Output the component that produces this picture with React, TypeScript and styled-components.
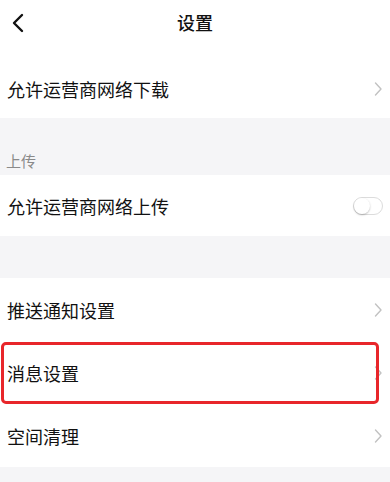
import { createGlobalStyle } from "styled-components";
import styled from "styled-components";

const GlobalStyle = createGlobalStyle`
    html, body {
        margin: 0;
        padding: 0;
        background: #f5f5f7;
        font-family: "Noto Sans CJK SC", "Noto Sans", sans-serif;
    }
`;

const Page = styled.div`
    width: 390px;
    height: 482px;
    overflow: hidden;
    background: #f5f5f7;
    display: flex;
    flex-direction: column;
`;

const Header = styled.div`
    height: 60px;
    background: #fff;
    display: flex;
    align-items: flex-start;
    justify-content: center;
    position: relative;
    flex-shrink: 0;
`;

const Title = styled.span`
    font-size: 18px;
    font-weight: 500;
    color: #111;
    margin-top: 9px;
`;

const BackButton = styled.div`
    position: absolute;
    left: 10px;
    top: 12px;
    width: 18px;
    height: 22px;
`;

const Row = styled.div<{ $h: number }>`
    height: ${(p) => p.$h}px;
    background: #fff;
    display: flex;
    align-items: center;
    justify-content: space-between;
    padding: 0 7px;
    position: relative;
    flex-shrink: 0;
`;

const Label = styled.span`
    font-size: 18px;
    color: #111;
`;

const Gap = styled.div<{ $h: number }>`
    height: ${(p) => p.$h}px;
    flex-shrink: 0;
`;

const SectionTitle = styled.div`
    height: 57px;
    display: flex;
    align-items: flex-end;
    padding: 0 6px 4px;
    box-sizing: border-box;
    font-size: 15px;
    color: #8a8a8a;
    flex-shrink: 0;
`;

const Toggle = styled.div`
    width: 30px;
    height: 18px;
    border-radius: 9px;
    border: 1px solid #dcdcdc;
    background: #fff;
    box-sizing: border-box;
    position: relative;
    &::after {
        content: "";
        position: absolute;
        left: 0;
        top: 0;
        width: 16px;
        height: 16px;
        border-radius: 50%;
        background: #fff;
        box-shadow: 0 1px 2px rgba(0, 0, 0, 0.25);
    }
`;

const Highlight = styled.div`
    position: absolute;
    left: 1px;
    top: 1px;
    right: 11px;
    bottom: 0;
    border: 3px solid #e8262a;
    border-radius: 5px;
    pointer-events: none;
`;

function Chevron() {
    return (
        <svg width="10" height="16" viewBox="0 0 10 16">
            <path d="M2.5 2 L8 8 L2.5 14" fill="none" stroke="#c2c2c2" strokeWidth="1.4" strokeLinecap="round" strokeLinejoin="round" />
        </svg>
    );
}

export default function App() {
    return (
        <Page>
            <GlobalStyle />
            <Header>
                <BackButton>
                    <svg width="18" height="22" viewBox="0 0 18 22">
                        <path d="M12 3 L4 11 L12 19" fill="none" stroke="#111" strokeWidth="2.4" strokeLinecap="round" strokeLinejoin="round" />
                    </svg>
                </BackButton>
                <Title>设置</Title>
            </Header>
            <Row $h={58}>
                <Label>允许运营商网络下载</Label>
                <Chevron />
            </Row>
            <SectionTitle>上传</SectionTitle>
            <Row $h={61}>
                <Label>允许运营商网络上传</Label>
                <Toggle />
            </Row>
            <Gap $h={42} />
            <Row $h={63}>
                <Label>推送通知设置</Label>
                <Chevron />
            </Row>
            <Row $h={63}>
                <Label>消息设置</Label>
                <Chevron />
                <Highlight />
            </Row>
            <Row $h={63}>
                <Label>空间清理</Label>
                <Chevron />
            </Row>
        </Page>
    );
}
